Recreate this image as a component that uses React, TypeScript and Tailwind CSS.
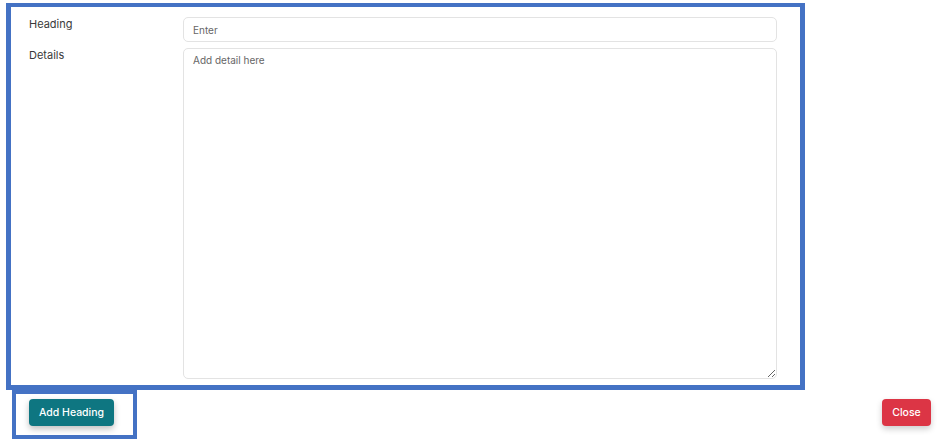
import React from "react";

const App = () => {
  return (
    <div className="w-[942px] h-[445px] bg-white font-['Inter',sans-serif] text-[11px] text-[#333]">
      <div className="ml-[6px] mt-[3px] w-[799px] h-[387px] border-[#4472c4] border-x-[5px] border-t-4 border-b-[5px] pl-[18px] pr-[23px] pt-[10px] pb-[6px] flex flex-col gap-[6px]">
        <div className="flex">
          <label className="w-[154px] text-[#3a3a3a] leading-[14px]">Heading</label>
          <input
            type="text"
            placeholder="Enter"
            className="flex-1 h-[25px] rounded-[5px] border border-[#e3e3e3] px-[9px] text-[10px] outline-none placeholder:text-[#666]"
          />
        </div>
        <div className="flex flex-1">
          <label className="w-[154px] text-[#3a3a3a] leading-[14px]">Details</label>
          <textarea
            placeholder="Add detail here"
            className="flex-1 h-full rounded-[5px] border border-[#e3e3e3] px-[9px] py-[4px] text-[10px] outline-none placeholder:text-[#666]"
          />
        </div>
      </div>
      <div className="flex justify-between items-start pl-[12px] pr-[11px]">
        <div className="w-[125px] h-[49px] border-4 border-[#4472c4] pl-[13px] pt-[5px]">
          <button className="w-[85px] h-[27px] rounded-[4px] bg-[#0e7681] text-white text-[10.5px] font-medium shadow-[0_3px_6px_rgba(0,0,0,0.25)]">
            Add Heading
          </button>
        </div>
        <button className="mt-[9px] w-[49px] h-[27px] rounded-[4px] bg-[#dc3545] text-white text-[10.5px] font-medium shadow-[0_3px_6px_rgba(0,0,0,0.2)]">
          Close
        </button>
      </div>
    </div>
  );
};

export default App;
